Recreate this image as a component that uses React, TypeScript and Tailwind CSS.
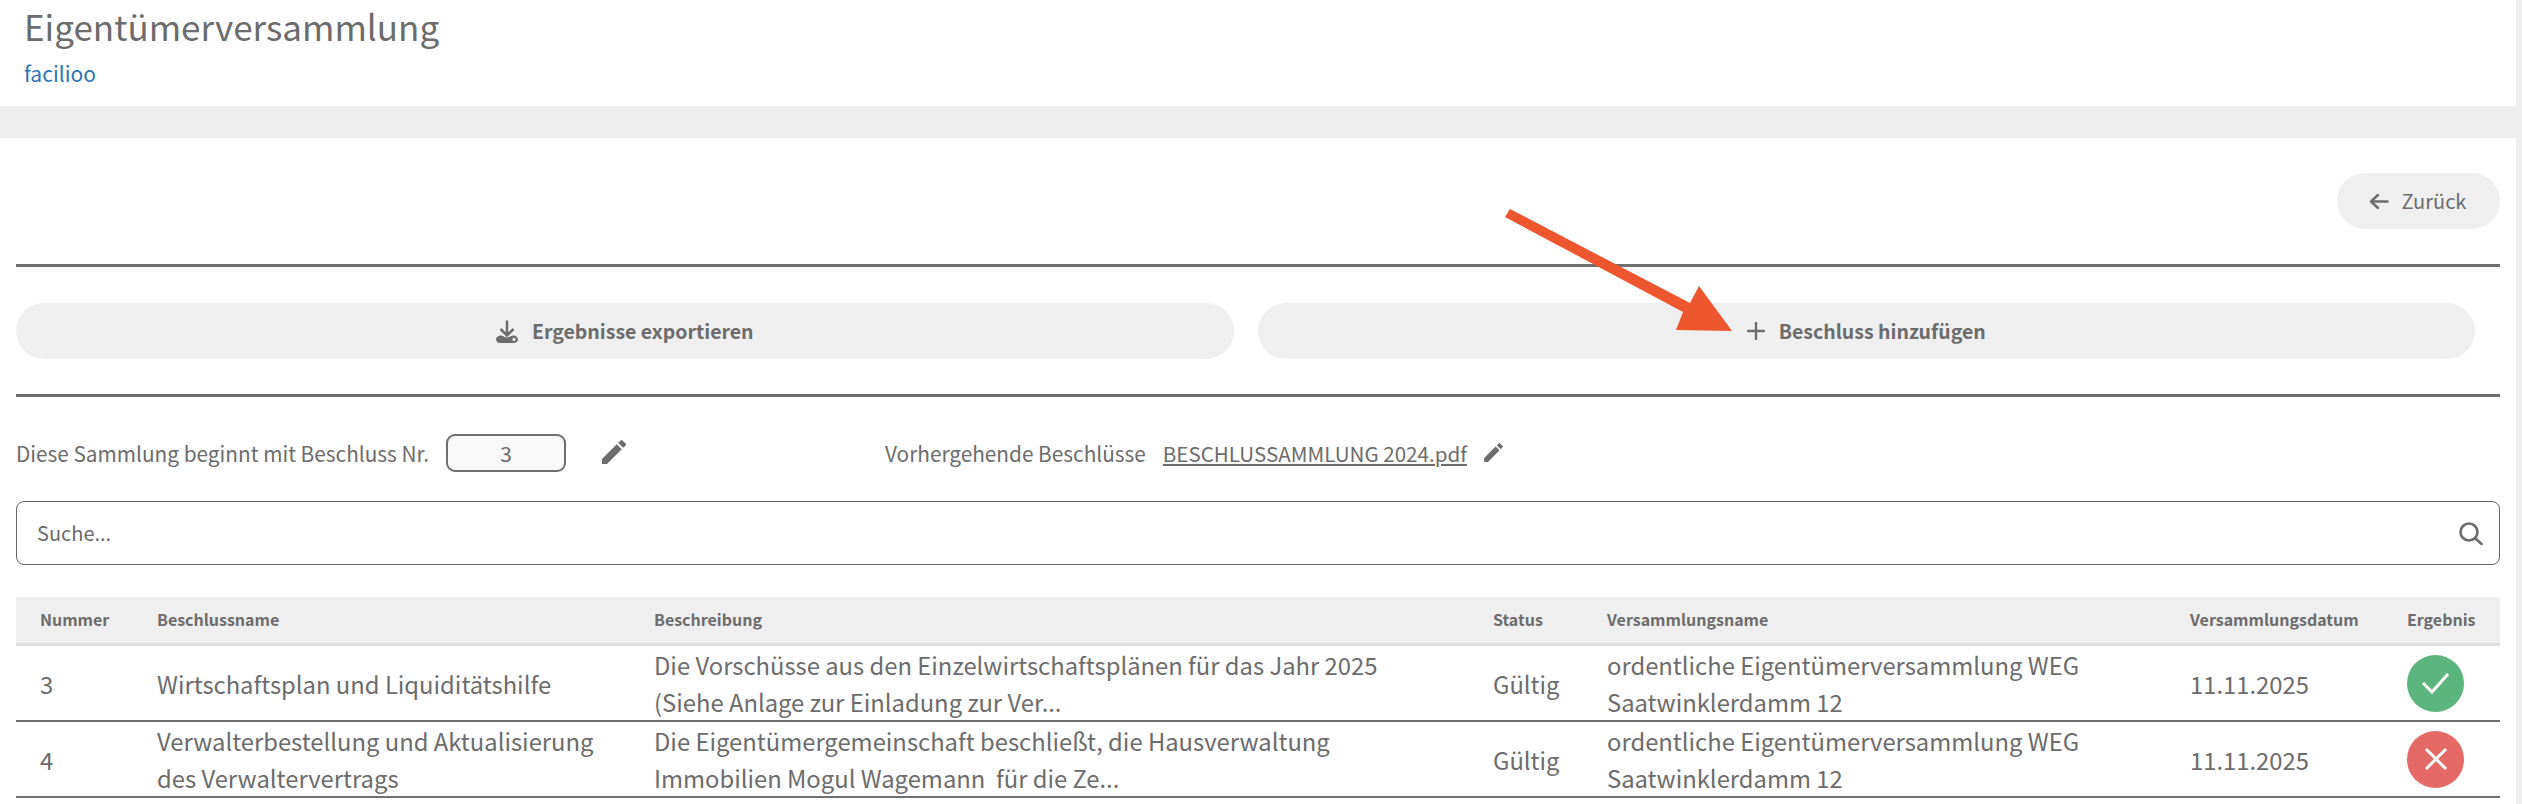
import React from "react";
import { MdEdit } from "react-icons/md";

const font = "font-['Noto_Sans_CJK_JP','Liberation_Sans',sans-serif]";
const grid = "grid grid-cols-[117px_497px_839px_114px_583px_217px_117px]";

function HeadCell({ children }: { children: React.ReactNode }) {
  return <div className="pl-6 pb-[2px] flex items-center whitespace-nowrap">{children}</div>;
}

function BodyCell({ children }: { children: React.ReactNode }) {
  return <div className="pl-6 flex items-center">{children}</div>;
}

function BackArrow() {
  return (
    <svg width="20" height="17" viewBox="0 0 20 17" fill="none" stroke="currentColor" strokeWidth="2.5" strokeLinecap="round" strokeLinejoin="round">
      <path d="M2 8.5h16.5M9 2 2 8.5 9 15" />
    </svg>
  );
}

function PlusIcon() {
  return (
    <svg width="18" height="18" viewBox="0 0 18 18" fill="none" stroke="currentColor" strokeWidth="2.4" strokeLinecap="round">
      <path d="M9 1v16M1 9h16" />
    </svg>
  );
}

function ExportIcon() {
  return (
    <svg width="22" height="23" viewBox="0 0 22 23" fill="none">
      <path d="M11 0.5v14M4.5 9l6.5 6.5L17.500 9" stroke="currentColor" strokeWidth="2.5" />
      <path fillRule="evenodd" d="M5 15.500c2 0 3.500 2 6 2s4-2 6.500-2c2.500 0 4.500 2 4.500 3.800 0 2-1.500 3.700-4 3.700H4c-2.500 0-4-1.700-4-3.700 0-2 2.500-3.800 5-3.800zM18 17.800a1.700 1.700 0 1 0 0 3.400 1.700 1.700 0 0 0 0-3.400z" fill="currentColor" />
    </svg>
  );
}

function SearchIcon() {
  return (
    <svg width="24" height="23" viewBox="0 0 24 23" fill="none" stroke="currentColor" strokeWidth="2.6" strokeLinecap="round">
      <circle cx="10" cy="10" r="8.500" />
      <path d="M16.500 16.500 22.500 22" />
    </svg>
  );
}

const rows = [
  {
    nr: "3",
    name: <>Wirtschaftsplan und Liquiditätshilfe</>,
    desc: <>Die Vorschüsse aus den Einzelwirtschaftsplänen für das Jahr 2025<br />(Siehe Anlage zur Einladung zur Ver...</>,
    ok: true,
  },
  {
    nr: "4",
    name: <>Verwalterbestellung und Aktualisierung<br />des Verwaltervertrags</>,
    desc: <>Die Eigentümergemeinschaft beschließt, die Hausverwaltung<br />Immobilien Mogul Wagemann&nbsp; für die Ze...</>,
    ok: false,
  },
];

export default function App() {
  return (
    <div className={`${font} relative w-[2522px] h-[804px] overflow-hidden bg-white text-[#6c6c6c] flex`}>
      <div className="w-[2516px] shrink-0">
        <header className="h-[106px] px-6 pt-1">
          <h1 className="text-[35px] leading-[44px] font-normal">Eigentümerversammlung</h1>
          <a className="block mt-3 text-[21px] leading-[26px] text-[#2e75b6]">facilioo</a>
        </header>
        <div className="h-8 bg-[#eeeeee]" />
        <main className="pl-4 pr-4">
          <div className="h-[129px] pt-[35px] flex justify-end items-start border-b-[3px] border-[#6f6f6f]">
            <button className="h-[56px] w-[163px] rounded-[28px] bg-[#efefef] flex items-center justify-center gap-[13px] pr-[2px] text-[20px]">
              <BackArrow />
              <span>Zurück</span>
            </button>
          </div>
          <div className="h-[130px] pt-9 pr-[25px] border-b-[3px] border-[#6f6f6f] grid grid-cols-2 gap-6 items-start">
            <button className="h-[56px] rounded-[28px] bg-[#efefef] flex items-center justify-center gap-[14px] text-[19.5px] font-semibold">
              <ExportIcon />
              <span>Ergebnisse exportieren</span>
            </button>
            <button className="h-[56px] rounded-[28px] bg-[#efefef] flex items-center justify-center gap-[14px] text-[19.5px] font-semibold">
              <PlusIcon />
              <span>Beschluss hinzufügen</span>
            </button>
          </div>
          <div className="h-[104px] pt-[37px] flex items-start text-[20.8px] leading-[38px]">
            <span className="w-[430px] shrink-0 whitespace-nowrap">Diese Sammlung beginnt mit Beschluss Nr.</span>
            <span className="w-[120px] h-[38px] rounded-[9px] border-2 border-[#6f6f6f] bg-[#f8f8f8] flex items-center justify-center">3</span>
            <MdEdit size={32} className="ml-8 mt-[2px] shrink-0" />
            <span className="ml-[255px] whitespace-nowrap">Vorhergehende Beschlüsse</span>
            <span className="ml-[17px] underline whitespace-nowrap text-[20.6px]">BESCHLUSSAMMLUNG 2024.pdf</span>
            <MdEdit size={25} className="ml-[14px] mt-[6px] shrink-0" />
          </div>
          <div className="h-[64px] rounded-lg border border-[#666666] flex items-center justify-between pl-5 pr-4 text-[20px]">
            <span>Suche...</span>
            <SearchIcon />
          </div>
          <div className="mt-8 w-[2484px]">
            <div className={`${grid} h-[49px] bg-[#efefef] border-b-[3px] border-[#dddddd] text-[16px] font-semibold`}>
              {["Nummer", "Beschlussname", "Beschreibung", "Status", "Versammlungsname", "Versammlungsdatum", "Ergebnis"].map((h) => (
                <HeadCell key={h}>{h}</HeadCell>
              ))}
            </div>
            {rows.map((r) => (
              <div key={r.nr} className={`${grid} h-[76px] border-b-2 border-[#6f6f6f] text-[23.8px] leading-[37px]`}>
                <BodyCell>{r.nr}</BodyCell>
                <BodyCell><div className="whitespace-nowrap">{r.name}</div></BodyCell>
                <BodyCell><div className="whitespace-nowrap">{r.desc}</div></BodyCell>
                <BodyCell>Gültig</BodyCell>
                <BodyCell><div className="whitespace-nowrap">ordentliche Eigentümerversammlung WEG<br />Saatwinklerdamm 12</div></BodyCell>
                <BodyCell>11.11.2025</BodyCell>
                <BodyCell>
                  <div className={`w-[57px] h-[57px] rounded-full flex items-center justify-center ${r.ok ? "bg-[#5cb57e]" : "bg-[#e56a65]"}`}>
                    {r.ok ? (
                      <svg width="30" height="24" viewBox="0 0 30 24" fill="none" stroke="#ffffff" strokeWidth="3">
                        <path d="M2 12l9 9L27 3" />
                      </svg>
                    ) : (
                      <svg width="24" height="24" viewBox="0 0 24 24" fill="none" stroke="#ffffff" strokeWidth="3">
                        <path d="M2 2l20 20M22 2 2 22" />
                      </svg>
                    )}
                  </div>
                </BodyCell>
              </div>
            ))}
          </div>
        </main>
      </div>
      <div className="w-[6px] bg-[#eeeeee]" />
      <svg className="absolute left-[1500px] top-[205px]" width="240" height="130" viewBox="1500 205 240 130">
        <path d="M1505 217 1510 209 1690 303 1699 286 1732 331 1676 330 1683 312Z" fill="#ee562f" />
      </svg>
    </div>
  );
}
